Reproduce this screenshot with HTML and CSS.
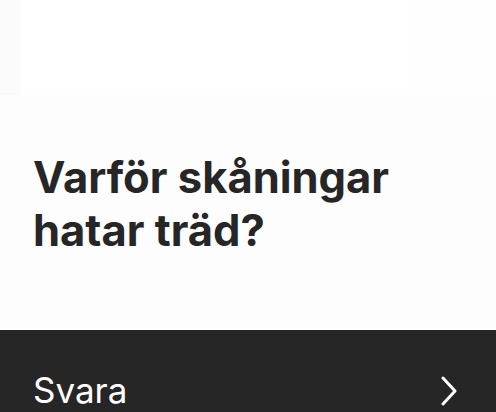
FILE: index.html
```html
<!DOCTYPE html>
<html lang="sv">
<head>
<meta charset="utf-8">
<link rel="stylesheet" href="styles.css">
</head>
<body>
<div class="page">
  <div class="top">
    <div class="side"></div>
    <div class="card"></div>
    <div class="rest"></div>
  </div>
  <div class="content">
    <h1 class="title">Varför skåningar hatar träd?</h1>
  </div>
  <div class="bar">
    <span class="label">Svara</span>
    <svg class="chev" width="18" height="30" viewBox="0 0 18 30"><path d="M3 2 L15 15 L3 28" fill="none" stroke="#fff" stroke-width="3" stroke-linecap="round" stroke-linejoin="round"/></svg>
  </div>
</div>
</body>
</html>
```
FILE: styles.css
```css
html, body { margin: 0; padding: 0; }
body { background: #fdfdfd; font-family: Inter, "Noto Sans", sans-serif; }
.page { width: 496px; height: 412px; display: flex; flex-direction: column; overflow: hidden; }
.top { display: flex; height: 95px; }
.side { width: 21px; background: #fbfbfb; }
.card { width: 387px; background: #ffffff; }
.rest { flex: 1; background: #fefefe; }
.content { height: 235px; padding: 0 33px; box-sizing: border-box; }
.title { margin: 0; padding-top: 56px; font-size: 43.5px; line-height: 53px; font-weight: 700; color: #262626; letter-spacing: 0; width: 400px; }
.bar { flex: 1; background: #262626; display: flex; align-items: flex-start; justify-content: space-between; padding: 39px 38px 0 33px; }
.label { color: #fff; font-size: 35px; line-height: 42px; font-weight: 400; }
.chev { margin-top: 7px; }
```
